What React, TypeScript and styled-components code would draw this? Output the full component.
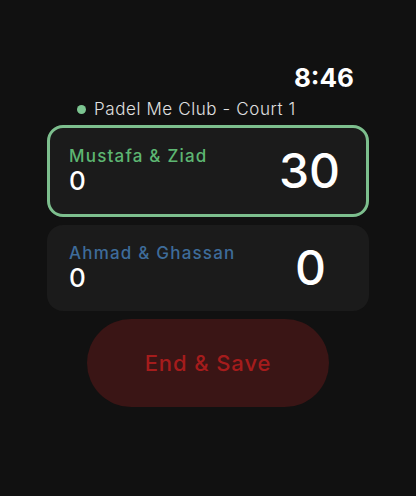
import React from 'react';
import styled, { createGlobalStyle } from 'styled-components';

const GlobalStyle = createGlobalStyle`
  html, body {
    margin: 0;
    padding: 0;
    background: #111111;
  }
  body {
    font-family: "Inter", "Noto Sans", sans-serif;
  }
`;

type Team = {
  name: string;
  color: string;
  games: number;
  points: string;
  serving: boolean;
};

const teams: Team[] = [
  { name: 'Mustafa & Ziad', color: '#5db672', games: 0, points: '30', serving: true },
  { name: 'Ahmad & Ghassan', color: '#3e6c9a', games: 0, points: '0', serving: false },
];

const App = () => {
  return (
    <Screen>
      <GlobalStyle />
      <Header>
        <Time>8:46</Time>
      </Header>

      <Court>
        <Dot />
        <span>Padel Me Club - Court 1</span>
      </Court>

      <Cards>
        {teams.map((team) => (
          <Card key={team.name} active={team.serving}>
            <TeamInfo>
              <TeamName color={team.color}>{team.name}</TeamName>
              <Games>{team.games}</Games>
            </TeamInfo>
            <Points>{team.points}</Points>
          </Card>
        ))}
      </Cards>

      <EndButton>End &amp; Save</EndButton>
    </Screen>
  );
};

export default App;

const Screen = styled.div`
  width: 416px;
  height: 496px;
  box-sizing: border-box;
  padding-top: 62px;
  display: flex;
  flex-direction: column;
  align-items: center;
  background: #111111;
`;

const Header = styled.div`
  width: 100%;
  box-sizing: border-box;
  padding-right: 62px;
  display: flex;
  justify-content: flex-end;
`;

const Time = styled.div`
  color: #ffffff;
  font-size: 26px;
  font-weight: 700;
  line-height: 32px;
`;

const Court = styled.div`
  width: 100%;
  box-sizing: border-box;
  padding-left: 77px;
  margin-top: 4px;
  display: flex;
  align-items: center;
  gap: 8px;
  color: #e0e0e0;
  font-size: 17px;
  font-weight: 300;
  letter-spacing: 0.6px;
  line-height: 22px;
`;

const Dot = styled.span`
  width: 9px;
  height: 9px;
  border-radius: 50%;
  background: #7cc591;
`;

const Cards = styled.div`
  margin-top: 5px;
  display: flex;
  flex-direction: column;
  gap: 8px;
`;

const Card = styled.div<{ active: boolean }>`
  width: 322px;
  height: ${(p) => (p.active ? 92 : 86)}px;
  box-sizing: border-box;
  padding: 0 ${(p) => (p.active ? 26 : 43)}px 0 ${(p) => (p.active ? 19 : 22)}px;
  display: flex;
  align-items: center;
  justify-content: space-between;
  background: #1b1b1b;
  border-radius: 16px;
  border: ${(p) => (p.active ? '3px solid #7dbf8e' : 'none')};
`;

const TeamInfo = styled.div`
  display: flex;
  flex-direction: column;
`;

const TeamName = styled.div<{ color: string }>`
  color: ${(p) => p.color};
  font-size: 17px;
  font-weight: 500;
  letter-spacing: 1.2px;
  line-height: 20px;
`;

const Games = styled.div`
  color: #ffffff;
  font-size: 26px;
  font-weight: 500;
  line-height: 30px;
`;

const Points = styled.div`
  color: #ffffff;
  font-size: 48px;
  font-weight: 500;
  line-height: 54px;
`;

const EndButton = styled.button`
  margin-top: 8px;
  width: 242px;
  height: 88px;
  border: none;
  border-radius: 44px;
  background: #3a1515;
  color: #a51c1c;
  font-family: inherit;
  font-size: 22px;
  font-weight: 500;
  letter-spacing: 0.9px;
  cursor: pointer;
`;
